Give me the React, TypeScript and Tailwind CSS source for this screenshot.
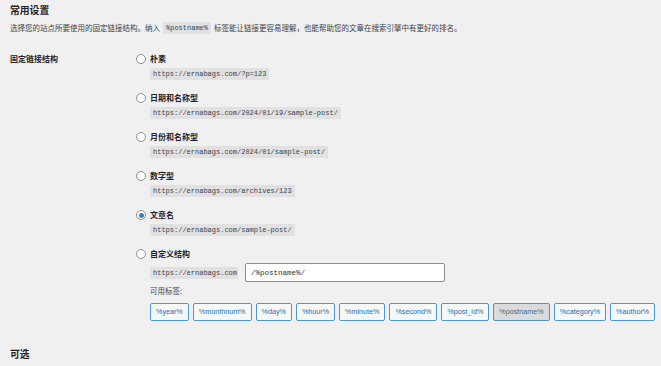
import React, { useState } from 'react';

const cjk = '"Noto Sans CJK SC", "Noto Sans", sans-serif';
const mono = '"Liberation Mono", "DejaVu Sans Mono", monospace';

// 单个选项
const Option = ({ label, sample, checked, onSelect }) => {
    return (
        <div className="mb-[12px]">
            <label className="flex items-center h-[12px] cursor-pointer" onClick={onSelect}>
                <span className="w-[10px] h-[10px] rounded-full border border-[#8c8f94] bg-white flex items-center justify-center mr-[4px] shrink-0">
                    {checked && <span className="w-[5px] h-[5px] rounded-full bg-[#3582c4]"></span>}
                </span>
                <span className="text-[8px] font-semibold text-[#1d2327]">{label}</span>
            </label>
            <div className="pl-[14px] mt-[3px] flex">
                <code className="h-[12px] leading-[12px] px-[3px] bg-[#e1e1e2] text-[7px] text-[#3c434a]" style={{ fontFamily: mono }}>
                    {sample}
                </code>
            </div>
        </div>
    );
};

const App = () => {
    const [selected, setSelected] = useState('postname');
    const [structure, setStructure] = useState('/%postname%/');

    const options = [
        { id: 'plain', label: '朴素', sample: 'https://ernabags.com/?p=123' },
        { id: 'day', label: '日期和名称型', sample: 'https://ernabags.com/2024/01/19/sample-post/' },
        { id: 'month', label: '月份和名称型', sample: 'https://ernabags.com/2024/01/sample-post/' },
        { id: 'numeric', label: '数字型', sample: 'https://ernabags.com/archives/123' },
        { id: 'postname', label: '文章名', sample: 'https://ernabags.com/sample-post/' },
    ];

    const tags = ['%year%', '%monthnum%', '%day%', '%hour%', '%minute%', '%second%', '%post_id%', '%postname%', '%category%', '%author%'];

    return (
        <div className="w-[661px] h-[366px] overflow-hidden bg-[#f0f0f1] text-[#3c434a] pl-[10px]" style={{ fontFamily: cjk }}>
            <h2 className="pt-[4px] h-[16px] leading-[12px] text-[9.8px] font-bold text-[#1d2327]">常用设置</h2>
            <p className="mt-[6px] h-[12px] leading-[12px] text-[7.5px] flex items-center whitespace-nowrap">
                选择您的站点所要使用的固定链接结构。纳入
                <code className="mx-[3px] h-[12px] leading-[12px] px-[3px] bg-[#e1e1e2] text-[7px]" style={{ fontFamily: mono }}>%postname%</code>
                标签能让链接更容易理解，也能帮助您的文章在搜索引擎中有更好的排名。
            </p>

            {/* 固定链接结构 */}
            <div className="flex mt-[19px]">
                <div className="w-[126px] h-[12px] leading-[12px] text-[8px] font-semibold text-[#1d2327] shrink-0">固定链接结构</div>
                <div>
                    {options.map((o) => (
                        <Option
                            key={o.id}
                            label={o.label}
                            sample={o.sample}
                            checked={selected === o.id}
                            onSelect={() => setSelected(o.id)}
                        />
                    ))}

                    {/* 自定义结构 */}
                    <label className="flex items-center h-[12px] cursor-pointer" onClick={() => setSelected('custom')}>
                        <span className="w-[10px] h-[10px] rounded-full border border-[#8c8f94] bg-white flex items-center justify-center mr-[4px] shrink-0">
                            {selected === 'custom' && <span className="w-[5px] h-[5px] rounded-full bg-[#3582c4]"></span>}
                        </span>
                        <span className="text-[8px] font-semibold text-[#1d2327]">自定义结构</span>
                    </label>
                    <div className="pl-[14px] mt-[3px] flex items-center">
                        <code className="h-[12px] leading-[12px] px-[3px] bg-[#e1e1e2] text-[7px] w-[88px]" style={{ fontFamily: mono }}>
                            https://ernabags.com
                        </code>
                        <input
                            type="text"
                            value={structure}
                            onChange={(e) => setStructure(e.target.value)}
                            className="ml-[7px] w-[200px] h-[19px] px-[5px] bg-white border border-[#8c8f94] rounded-[2px] text-[7.5px] text-[#2c3338] outline-none"
                            style={{ fontFamily: mono }}
                        />
                    </div>
                    <div className="pl-[14px] mt-[3px] h-[12px] leading-[12px] text-[7.5px]">可用标签:</div>
                    <div className="pl-[14px] mt-[6px] flex flex-nowrap gap-[4px]">
                        {tags.map((t) => (
                            <button
                                key={t}
                                className={`h-[18px] px-[5px] border rounded-[2px] text-[7.2px] whitespace-nowrap ${t === '%postname%'
                                        ? 'bg-[#d9dbde] border-[#5f8db5] text-[#50667c]'
                                        : 'bg-[#f6f7f7] border-[#4f94d4] text-[#2271b1]'
                                    }`}
                                style={{ fontFamily: '"Liberation Sans", Arial, sans-serif' }}
                            >
                                {t}
                            </button>
                        ))}
                    </div>
                </div>
            </div>

            <h2 className="mt-[27px] h-[12px] leading-[12px] text-[9.8px] font-bold text-[#1d2327]">可选</h2>
        </div>
    );
};

export default App;
